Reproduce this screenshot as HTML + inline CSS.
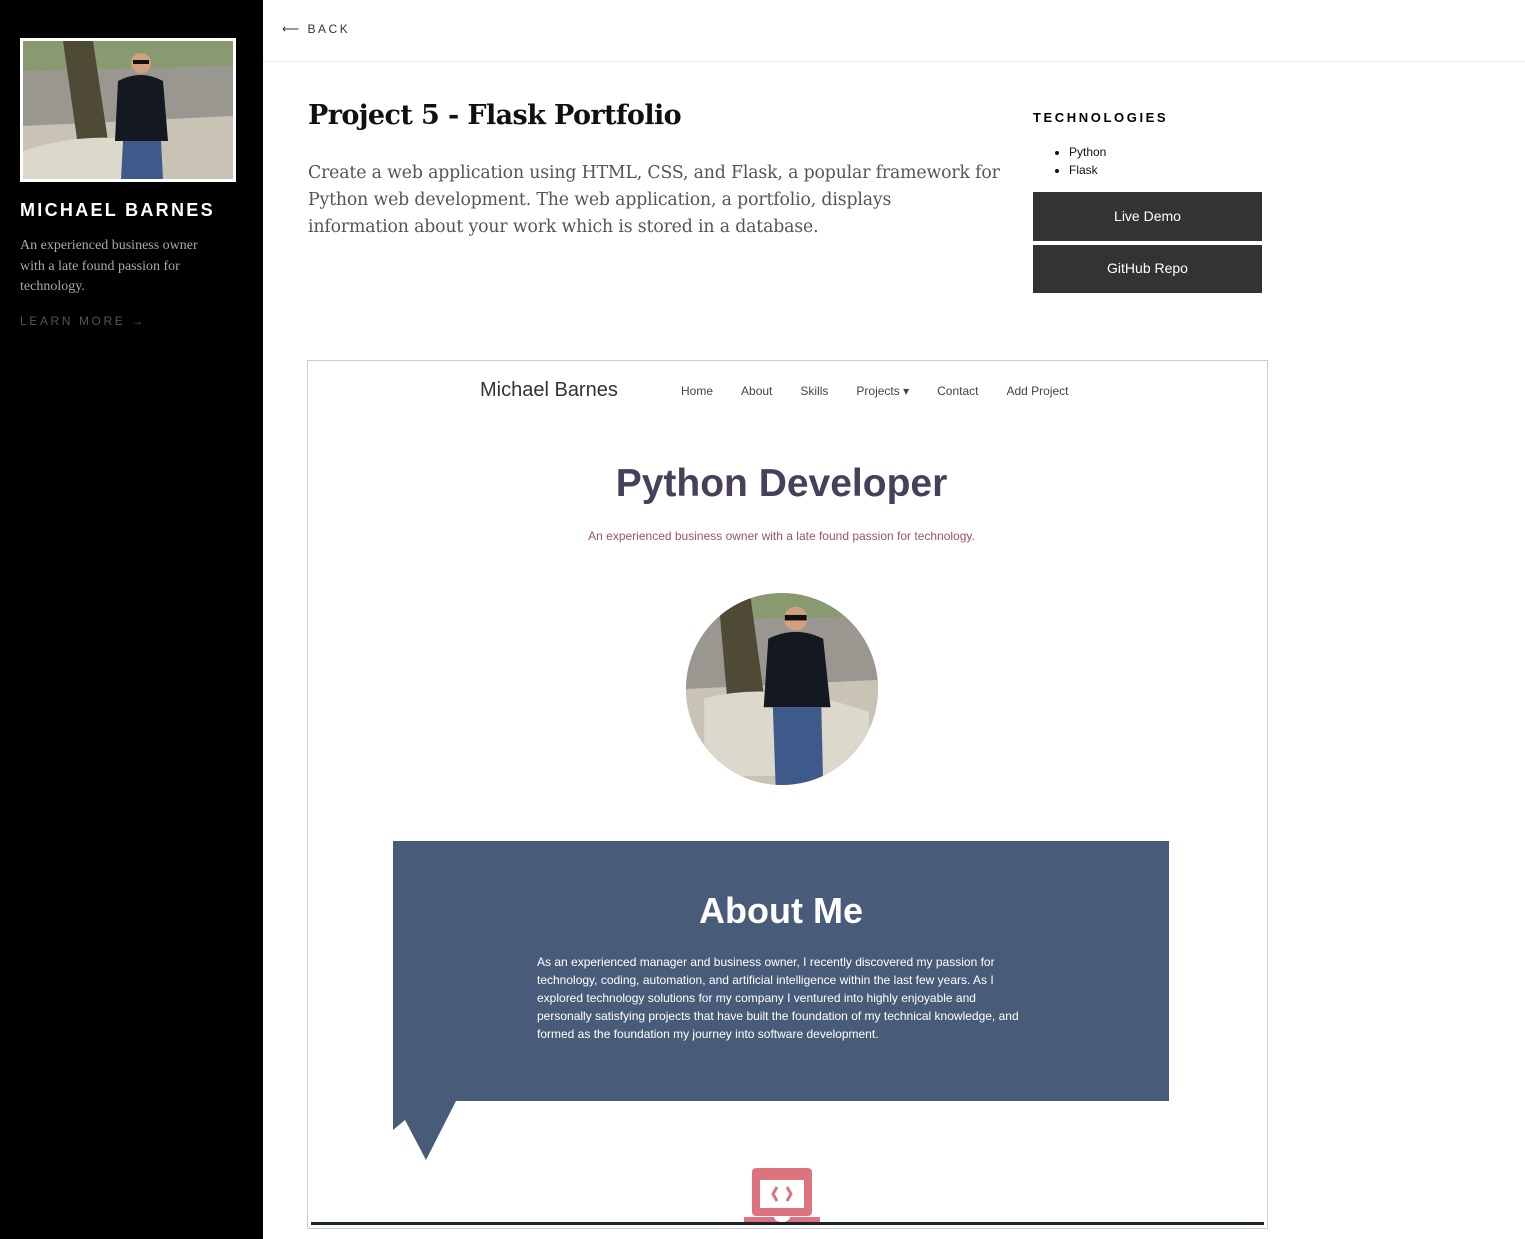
<!DOCTYPE html>
<html><head><meta charset="utf-8"><style>
*{margin:0;padding:0;box-sizing:border-box}
body{width:1525px;height:1239px;overflow:hidden;background:#fff;position:relative;font-family:"Liberation Sans",sans-serif}
.a{position:absolute}
.serif{font-family:"DejaVu Serif","Liberation Serif",serif}
</style></head><body>
<div class="a" style="left:0;top:0;width:263px;height:1239px;background:#000"></div>
<div class="a" style="left:20px;top:38px;width:216px;height:144px;background:#fff;padding:3px">
<svg width="210" height="138" viewBox="0 0 210 138" preserveAspectRatio="none">
<rect width="210" height="138" fill="#b8b4a8"/>
<rect width="210" height="40" fill="#8a9a70"/>
<path d="M0 30 L210 25 L210 80 L0 85Z" fill="#9a9790"/>
<path d="M0 85 L210 75 L210 138 L0 138Z" fill="#c9c3b6"/>
<path d="M40 0 L70 0 L85 100 L55 105Z" fill="#4f4a35"/>
<path d="M0 110 Q60 90 120 100 L140 138 L0 138Z" fill="#ddd8cc"/>
<circle cx="118" cy="22" r="10" fill="#d0a080"/>
<rect x="110" y="19" width="16" height="4" fill="#111"/>
<path d="M95 40 Q118 28 140 40 L145 100 L92 100Z" fill="#141820"/>
<path d="M100 100 L138 100 L140 138 L98 138Z" fill="#3d5a8a"/>
</svg></div>
<div class="a" style="left:20px;top:200px;color:#fff;font-weight:bold;font-size:18px;letter-spacing:2.3px">MICHAEL BARNES</div>
<div class="a" style="left:20px;top:236px;width:205px;color:#aaa;font-size:14px;line-height:20.5px;font-family:'Liberation Serif',serif">An experienced business owner with a late found passion for technology.</div>
<div class="a" style="left:20px;top:314px;color:#555;font-size:12px;letter-spacing:2.6px">LEARN MORE →</div>

<div class="a" style="left:282px;top:22px;color:#333;font-size:12px;letter-spacing:2.5px">⟵ BACK</div>
<div class="a" style="left:263px;top:61px;width:1262px;height:1px;background:#eee"></div>
<div class="a serif" style="left:308px;top:100px;font-size:27px;font-weight:bold;letter-spacing:-0.6px;color:#111">Project 5 - Flask Portfolio</div>
<div class="a serif" style="left:308px;top:160px;width:760px;font-size:17.3px;letter-spacing:-0.15px;line-height:27px;color:#555">Create a web application using HTML, CSS, and Flask, a popular framework for<br>Python web development. The web application, a portfolio, displays<br>information about your work which is stored in a database.</div>
<div class="a" style="left:1033px;top:110px;font-size:13px;font-weight:bold;letter-spacing:2.6px;color:#000">TECHNOLOGIES</div>
<ul class="a" style="left:1069px;top:143px;font-size:12px;line-height:18px;color:#111"><li>Python</li><li>Flask</li></ul>
<div class="a" style="left:1033px;top:192px;width:229px;height:49px;background:#333;color:#fff;font-size:14px;text-align:center;line-height:49px">Live Demo</div>
<div class="a" style="left:1033px;top:245px;width:229px;height:48px;background:#333;color:#fff;font-size:14px;text-align:center;line-height:47px">GitHub Repo</div>

<div class="a" style="left:307px;top:360px;width:961px;height:869px;border:1px solid #ccc;overflow:hidden">
<div class="a" style="left:172px;top:18px;font-size:20px;color:#333">Michael Barnes</div>
<div class="a" style="left:373px;top:23px;font-size:12px;color:#444;word-spacing:0">Home<span style="margin-left:28px">About</span><span style="margin-left:28px">Skills</span><span style="margin-left:28px">Projects ▾</span><span style="margin-left:28px">Contact</span><span style="margin-left:28px">Add Project</span></div>
<div class="a" style="left:0;top:101px;width:947px;text-align:center;font-size:39px;font-weight:bold;color:#48405a">Python Developer</div>
<div class="a" style="left:0;top:168px;width:947px;text-align:center;font-size:12px;color:#9c5070">An experienced business owner with a late found passion for technology.</div>
<div class="a" style="left:378px;top:232px;width:192px;height:192px;border-radius:50%;overflow:hidden">
<svg width="192" height="192" viewBox="0 0 210 210" preserveAspectRatio="none">
<rect width="210" height="210" fill="#b8b4a8"/>
<rect width="210" height="40" fill="#8a9a70"/>
<path d="M0 30 L210 25 L210 100 L0 105Z" fill="#9a9790"/>
<path d="M0 105 L210 95 L210 210 L0 210Z" fill="#c9c3b6"/>
<path d="M35 0 L70 0 L85 110 L45 115Z" fill="#4f4a35"/>
<path d="M20 115 Q100 95 200 130 L200 200 L20 200Z" fill="#ddd8cc"/>
<circle cx="120" cy="28" r="13" fill="#d0a080"/>
<rect x="108" y="24" width="24" height="6" fill="#111"/>
<path d="M90 50 Q120 35 150 50 L158 125 L85 125Z" fill="#141820"/>
<path d="M95 125 L148 125 L150 210 L98 210Z" fill="#3d5a8a"/>
</svg></div>
<svg class="a" style="left:85px;top:480px" width="780" height="320"><path d="M0 0 H776 V260 H63 L33 319 L12 279 L0 289Z" fill="#485c7a"/></svg>
<div class="a" style="left:85px;top:529px;width:776px;text-align:center;font-size:36px;font-weight:bold;color:#fff">About Me</div>
<div class="a" style="left:229px;top:592px;width:488px;font-size:12px;line-height:18px;color:#fff">As an experienced manager and business owner, I recently discovered my passion for technology, coding, automation, and artificial intelligence within the last few years. As I explored technology solutions for my company I ventured into highly enjoyable and personally satisfying projects that have built the foundation of my technical knowledge, and formed as the foundation my journey into software development.</div>
<svg class="a" style="left:436px;top:806px" width="76" height="56"><rect x="8" y="1" width="60" height="48" rx="4" fill="#dc737f"/><rect x="16" y="13" width="44" height="28" fill="#fff"/><path d="M33 20 L29 27 L33 34 M43 20 L47 27 L43 34" stroke="#dc737f" stroke-width="3" fill="none"/><path d="M0 50 H30 Q31 55 38 55 Q45 55 46 50 H76 V56 H0Z" fill="#dc737f"/></svg>
<div class="a" style="left:3px;top:861px;width:953px;height:3px;background:#1c2430"></div>
</div>
</body></html>
